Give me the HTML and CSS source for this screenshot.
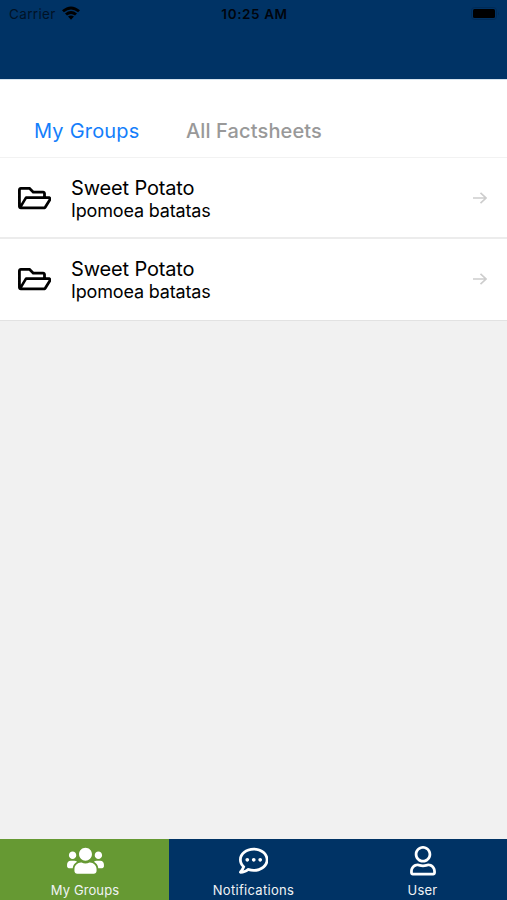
FILE: index.html
```html
<!DOCTYPE html>
<html lang="en">
<head>
<meta charset="utf-8">
<title>My Groups</title>
<link rel="stylesheet" href="styles.css">
</head>
<body>
<header class="header">
  <div class="status">
    <div class="carrier"><span class="carrier-name">Carrier</span>
      <svg class="wifi" viewBox="0 0 18 14"><path d="M0 4.3Q9-3.3 18 4.3L16.1 6.3Q9 .5 1.9 6.3ZM3 7.5Q9 2.6 15 7.5L13 9.5Q9 6.4 5 9.5ZM6 10.6Q9 8.2 12 10.6L9 13.8Z"/></svg>
    </div>
    <div class="time">10:25 AM</div>
    <svg class="battery" viewBox="0 0 29 13"><rect x=".5" y=".5" width="25" height="12" rx="3" fill="none" stroke="#002b57"/><rect x="2" y="2" width="22" height="9" rx="1.5"/><path d="M27 4.5q1.5 2 0 4z" fill="#002b57"/></svg>
  </div>
</header>
<nav class="tabs">
  <span class="tab tab-active">My Groups</span>
  <span class="tab tab-other">All Factsheets</span>
</nav>
<main class="list">
  <article class="row">
    <svg class="folder" viewBox="0 64 576 384"><path d="M527.9 224H480v-48c0-26.5-21.5-48-48-48H272l-64-64H48C21.500 64 0 85.500 0 112v288c0 26.500 21.500 48 48 48h400c16.500 0 31.900-8.500 40.700-22.600l79.900-128c20-31.900-3-73.400-40.700-73.400zM48 118c0-3.300 2.700-6 6-6h134.100l64 64H426c3.300 0 6 2.700 6 6v42H152c-16.800 0-32.400 8.800-41.100 23.200L48 351.400zm400 282H72l77.200-128H528z"/></svg>
    <div class="names"><div class="name">Sweet Potato</div><div class="latin">Ipomoea batatas</div></div>
    <svg class="arrow" viewBox="0 0 14 12"><path d="M0 6h13M7.500.8 13 6l-5.500 5.200"/></svg>
  </article>
  <article class="row">
    <svg class="folder" viewBox="0 64 576 384"><path d="M527.9 224H480v-48c0-26.5-21.5-48-48-48H272l-64-64H48C21.500 64 0 85.500 0 112v288c0 26.500 21.500 48 48 48h400c16.500 0 31.900-8.500 40.700-22.600l79.900-128c20-31.900-3-73.400-40.700-73.400zM48 118c0-3.300 2.700-6 6-6h134.100l64 64H426c3.300 0 6 2.700 6 6v42H152c-16.800 0-32.400 8.800-41.100 23.200L48 351.400zm400 282H72l77.200-128H528z"/></svg>
    <div class="names"><div class="name">Sweet Potato</div><div class="latin">Ipomoea batatas</div></div>
    <svg class="arrow" viewBox="0 0 14 12"><path d="M0 6h13M7.500.8 13 6l-5.500 5.200"/></svg>
  </article>
</main>
<footer class="bar">
  <div class="item item-active">
    <svg class="icon icon-groups" viewBox="0 0 640 512"><path d="M96 224c35.300 0 64-28.700 64-64s-28.700-64-64-64-64 28.700-64 64 28.700 64 64 64zm448 0c35.300 0 64-28.700 64-64s-28.700-64-64-64-64 28.700-64 64 28.700 64 64 64zm32 32h-64c-17.600 0-33.500 7.100-45.100 18.600 40.300 22.100 68.900 62 75.100 109.400h66c17.700 0 32-14.300 32-32v-32c0-35.300-28.700-64-64-64zm-256 0c61.900 0 112-50.100 112-112S381.900 32 320 32 208 82.100 208 144s50.100 112 112 112zm76.800 32h-8.300c-20.800 10-43.900 16-68.500 16s-47.600-6-68.500-16h-8.300C179.600 288 128 339.600 128 403.200V432c0 26.500 21.500 48 48 48h288c26.500 0 48-21.500 48-48v-28.800c0-63.600-51.600-115.200-115.200-115.200zm-223.700-13.400C161.500 263.100 145.600 256 128 256H64c-35.300 0-64 28.700-64 64v32c0 17.700 14.300 32 32 32h65.900c6.300-47.400 34.900-87.300 75.200-109.400z"/></svg>
    <span class="label label-groups">My Groups</span>
  </div>
  <div class="item">
    <svg class="icon icon-chat" viewBox="0 0 512 512"><path d="M144 208c-17.700 0-32 14.300-32 32s14.300 32 32 32 32-14.300 32-32-14.300-32-32-32zm112 0c-17.700 0-32 14.300-32 32s14.300 32 32 32 32-14.300 32-32-14.300-32-32-32zm112 0c-17.700 0-32 14.300-32 32s14.300 32 32 32 32-14.300 32-32-14.300-32-32-32zM256 32C114.600 32 0 125.100 0 240c0 47.600 19.900 91.200 52.900 126.300C38 405.700 7 439.100 6.500 439.500c-6.600 7-8.400 17.200-4.600 26S14.400 480 24 480c61.500 0 110-25.700 139.100-46.300C192 442.800 223.200 448 256 448c141.400 0 256-93.100 256-208S397.400 32 256 32zm0 368c-26.700 0-53.100-4.100-78.400-12.100l-22.700-7.200-19.500 13.800c-14.300 10.100-33.900 21.400-57.500 29 7.300-12.100 14.400-25.700 19.900-40.200l10.600-28.100-20.600-21.800C69.700 314.100 48 282.200 48 240c0-88.200 93.300-160 208-160s208 71.800 208 160-93.300 160-208 160z"/></svg>
    <span class="label label-notifications">Notifications</span>
  </div>
  <div class="item">
    <svg class="icon icon-user" viewBox="0 0 448 512"><path d="M313.600 304c-28.700 0-42.500 16-89.600 16s-60.800-16-89.600-16C60.200 304 0 364.200 0 438.400V464c0 26.500 21.500 48 48 48h352c26.500 0 48-21.500 48-48v-25.600c0-74.200-60.200-134.400-134.400-134.400zM400 464H48v-25.600c0-47.600 38.800-86.400 86.400-86.400 14.600 0 38.300 16 89.600 16 51.700 0 74.900-16 89.600-16 47.600 0 86.400 38.800 86.400 86.400V464zM224 288c79.500 0 144-64.500 144-144S303.500 0 224 0 80 64.500 80 144s64.500 144 144 144zm0-240c52.900 0 96 43.100 96 96s-43.100 96-96 96-96-43.100-96-96 43.100-96 96-96z"/></svg>
    <span class="label label-user">User</span>
  </div>
</footer>
</body>
</html>
```
FILE: styles.css
```css
* { box-sizing: border-box; }
body {
  margin: 0;
  height: 900px;
  display: flex;
  flex-direction: column;
  overflow: hidden;
  background: #f1f1f1;
  color: #000;
  font-family: Inter, "Liberation Sans", sans-serif;
}
svg { display: block; flex: none; }
.header { height: 79px; flex: none; background: #003365; }
.status {
  height: 27px;
  padding: 0 7px 0 9px;
  display: grid;
  grid-template-columns: 1fr auto 1fr;
  align-items: center;
  font-size: 13px;
  line-height: 16px;
  color: #00050d;
}
.carrier { display: flex; align-items: center; gap: 6px; }
.carrier-name { font-size: 13.5px; letter-spacing: .35px; color: #001225; }
.wifi { width: 18px; height: 14px; margin-top: -1px; }
.time { font-weight: 600; font-size: 13.5px; letter-spacing: .6px; }
.battery { width: 29px; height: 13px; justify-self: end; }
.tabs {
  height: 79px;
  flex: none;
  display: flex;
  align-items: flex-start;
  gap: 47px;
  padding: 38px 0 0 34px;
  background: #fff;
  border-top: 1px solid #d5e3ee;
  border-bottom: 1px solid #f2f2f2;
  font-size: 20px;
  line-height: 26px;
}
.tab-active { color: #147efb; width: 105px; white-space: nowrap; letter-spacing: .2px; }
.tab-other { color: #999; font-weight: 500; letter-spacing: .13px; }
.row {
  height: 81px;
  display: flex;
  align-items: center;
  background: #fff;
  border-bottom: 2px solid #ececec;
  padding: 2px 20px 0 17.5px;
}
.row:last-child { height: 82px; padding-top: 0; border-bottom: 1px solid #e2e2e2; }
.folder { width: 33.5px; height: 22.3px; margin-right: 20px; }
.names { flex: 1; }
.name { font-size: 20px; line-height: 24px; letter-spacing: -.15px; }
.latin { font-size: 18px; line-height: 22px; letter-spacing: -.16px; }
.arrow { width: 14px; height: 12px; margin-top: -2px; fill: none; stroke: #cdcdcd; stroke-width: 1.6; }
.bar {
  height: 61px;
  flex: none;
  margin-top: auto;
  display: grid;
  grid-template-columns: repeat(3, 1fr);
  background: #003365;
  color: #fff;
}
.item { display: flex; flex-direction: column; align-items: center; padding-top: 7px; }
.item-active { background: #669933; }
.icon { height: 29.5px; fill: #fff; }
.icon-groups { width: 37px; margin-left: 1px; }
.icon-chat { width: 29.5px; }
.icon-user { width: 26px; }
.label { font-size: 13px; line-height: 16px; margin-top: 6px; letter-spacing: .2px; color: #f0f3f5; }
.label-groups { margin-left: 1px; letter-spacing: .1px; }
.label-notifications { letter-spacing: .3px; }
```
